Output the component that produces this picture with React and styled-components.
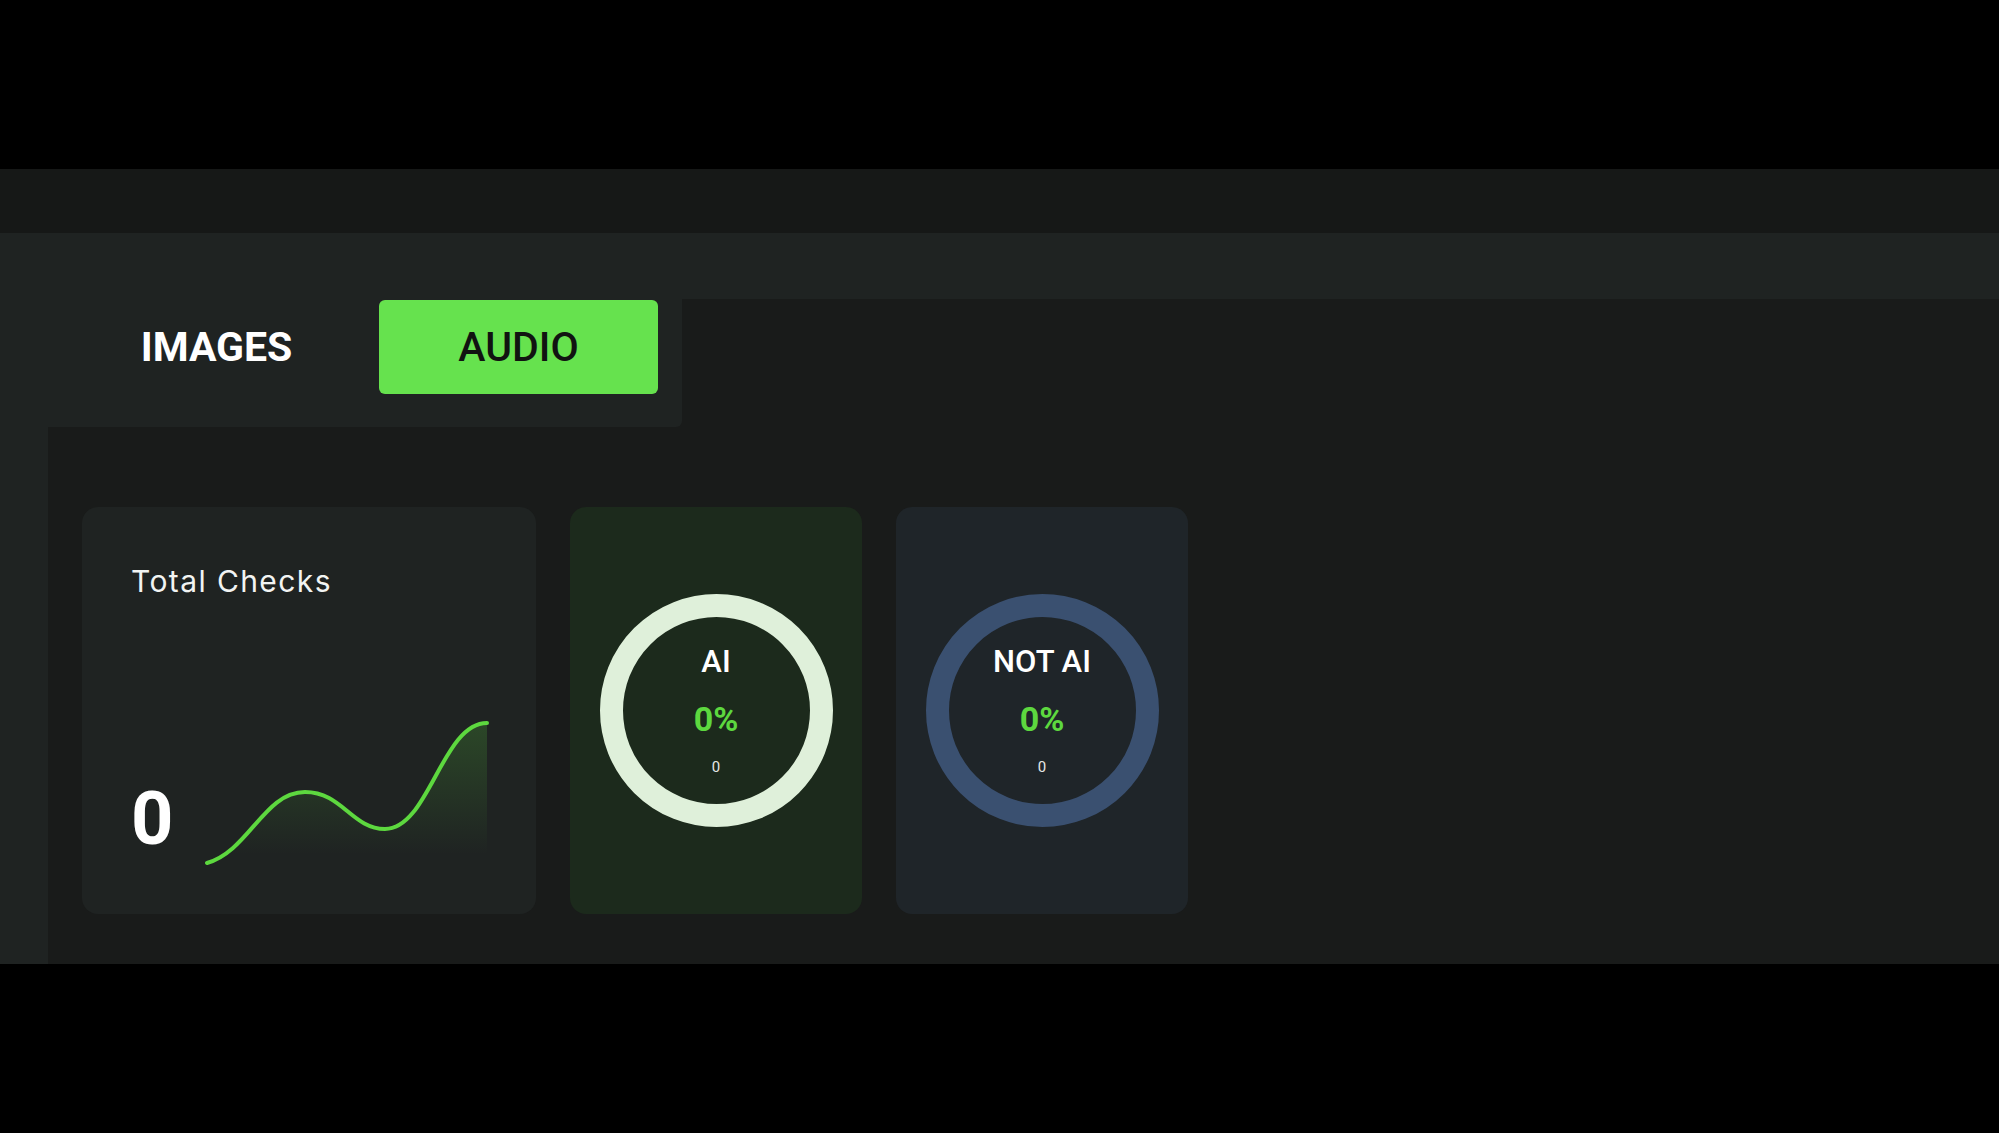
import React from "react";
import styled, { createGlobalStyle } from "styled-components";

const GlobalStyle = createGlobalStyle`
    * { box-sizing : border-box; }
    html, body {
        margin : 0;
        padding : 0;
        background : #000000;
        font-family : "Roboto", "Liberation Sans", sans-serif;
        color : #ffffff;
    }
`

const Letterbox = styled.div`
    height : 169px;
    background : #000000;
`

const TopBar = styled.header`
    height : 64px;
    background : #161817;
`

const Main = styled.main`
    display : flex;
    flex-direction : column;
    height : 731px;
    padding-top : 66px;
    background : #1f2322;
`

const Panel = styled.section`
    flex : 1;
    display : flex;
    flex-direction : column;
    margin-left : 48px;
    background : #191b1a;
`

const TabBar = styled.div`
    display : flex;
    align-items : flex-start;
    gap : 23px;
    width : 682px;
    height : 128px;
    margin-left : -48px;
    padding-left : 77px;
    background : #1f2322;
    border-bottom-right-radius : 6px;
`

const Tab = styled.button`
    width : 279px;
    height : 94px;
    margin-top : 1px;
    border : none;
    border-radius : 6px;
    background : ${p => p.$active ? "#66e24e" : "transparent"};
    color : ${p => p.$active ? "#111311" : "#ffffff"};
    font-family : "Roboto", "Liberation Sans", sans-serif;
    font-size : 41px;
    font-weight : ${p => p.$active ? 500 : 700};
    cursor : pointer;
`

const CardRow = styled.div`
    display : flex;
    gap : 34px;
    margin-top : 80px;
    padding-left : 34px;
`

const Card = styled.div`
    height : 407px;
    border-radius : 16px;
    background : ${p => p.$bg};
`

const TotalCard = styled(Card)`
    display : flex;
    flex-direction : column;
    justify-content : space-between;
    width : 454px;
    padding : 56px 0 48px 49px;
`

const CardTitle = styled.div`
    font-family : "Inter", "Noto Sans", sans-serif;
    font-size : 30px;
    line-height : 36px;
    font-weight : 400;
    letter-spacing : 1.4px;
    color : #f2f4f3;
`

const TotalRow = styled.div`
    display : flex;
    align-items : flex-end;
    gap : 31px;
`

const BigNumber = styled.div`
    font-size : 74px;
    line-height : 1;
    font-weight : 700;
    margin-bottom : 10px;
`

const RingCard = styled(Card)`
    display : flex;
    align-items : center;
    justify-content : center;
    width : 292px;
`

const Ring = styled.div`
    display : flex;
    flex-direction : column;
    align-items : center;
    justify-content : center;
    width : 233px;
    height : 233px;
    border-radius : 50%;
    border : 23px solid ${p => p.$color};
`

const RingLabel = styled.div`
    font-size : 31px;
    line-height : 1;
    font-weight : 500;
    color : #ffffff;
`

const RingPercent = styled.div`
    margin-top : 25px;
    font-size : 34px;
    line-height : 1;
    font-weight : 700;
    color : #5dd83f;
`

const RingCount = styled.div`
    margin-top : 24px;
    font-size : 15px;
    line-height : 1;
    color : #e6e8e7;
`

const Sparkline = () => {
    const line = "M3,147 C45,135 60,76 101,76 C138,76 148,113 181,113 C225,113 238,7 283,7"
    return (
        <svg width="286" height="150" viewBox="0 0 286 150">
            <defs>
                <linearGradient id="spark-fill" x1="0" y1="0" x2="0" y2="1">
                    <stop offset="0%" stopColor="#5dd83f" stopOpacity="0.2" />
                    <stop offset="92%" stopColor="#5dd83f" stopOpacity="0" />
                </linearGradient>
            </defs>
            <path d={line + " L283,150 L3,150 Z"} fill="url(#spark-fill)" />
            <path d={line} fill="none" stroke="#5dd83f" strokeWidth="4" strokeLinecap="round" />
        </svg>
    )
}

const ResultRing = ({ label, color, bg }) => (
    <RingCard $bg={bg}>
        <Ring $color={color}>
            <RingLabel>{label}</RingLabel>
            <RingPercent>0%</RingPercent>
            <RingCount>0</RingCount>
        </Ring>
    </RingCard>
)

export default function App() {
    return (
        <>
            <GlobalStyle />
            <Letterbox />
            <TopBar />
            <Main>
                <Panel>
                    <TabBar>
                        <Tab>IMAGES</Tab>
                        <Tab $active>AUDIO</Tab>
                    </TabBar>
                    <CardRow>
                        <TotalCard $bg="#1f2322">
                            <CardTitle>Total Checks</CardTitle>
                            <TotalRow>
                                <BigNumber>0</BigNumber>
                                <Sparkline />
                            </TotalRow>
                        </TotalCard>
                        <ResultRing label="AI" color="#dff0da" bg="#1c2a1c" />
                        <ResultRing label="NOT AI" color="#3a5070" bg="#1f2529" />
                    </CardRow>
                </Panel>
            </Main>
        </>
    )
}
